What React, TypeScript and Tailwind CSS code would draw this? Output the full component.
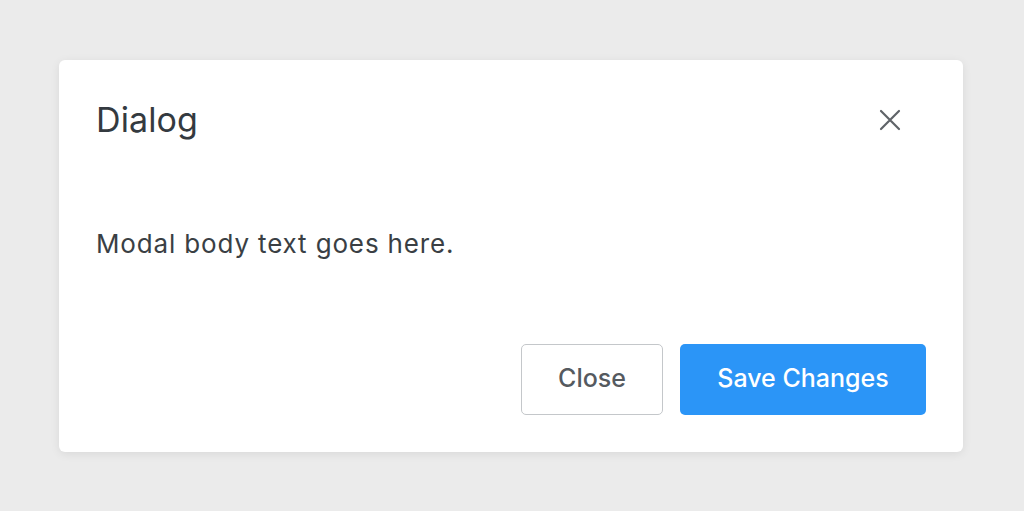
import React from 'react';

const CloseIcon: React.FC = () => (
  <svg width="22" height="22" viewBox="0 0 22 22" fill="none" stroke="#5f6368" strokeWidth="2.2" strokeLinecap="round">
    <path d="M2 2L20 20M20 2L2 20" />
  </svg>
);

const App: React.FC = () => {
  return (
    <div
      className="w-[1024px] h-[511px] bg-[#ebebeb] flex items-center justify-center"
      style={{ fontFamily: 'Inter, "Noto Sans", sans-serif' }}
    >
      <div className="w-[904px] h-[392px] bg-white rounded-[6px] shadow-[0_2px_10px_rgba(0,0,0,0.08)] flex flex-col px-[37px] ml-[-2px]">
        {/* Header */}
        <div className="flex items-center justify-between pt-[40px]">
          <h2 className="text-[34px] leading-[40px] text-[#343a40] font-normal tracking-[0.1px]">Dialog</h2>
          <button className="mr-[25px] p-0">
            <CloseIcon />
          </button>
        </div>

        {/* Body */}
        <div className="mt-[88px] text-[26px] leading-[32px] text-[#3a3f44] tracking-[0.85px]">
          Modal body text goes here.
        </div>

        {/* Footer */}
        <div className="flex justify-end gap-[17px] mt-auto mb-[37px]">
          <button className="w-[142px] h-[71px] rounded-[5px] border border-[#c4c7ca] bg-white text-[25px] text-[#555a5f] font-medium">
            Close
          </button>
          <button className="w-[246px] h-[71px] rounded-[5px] bg-[#2b95f7] text-[25px] text-white font-medium">
            Save Changes
          </button>
        </div>
      </div>
    </div>
  );
};

export default App;
